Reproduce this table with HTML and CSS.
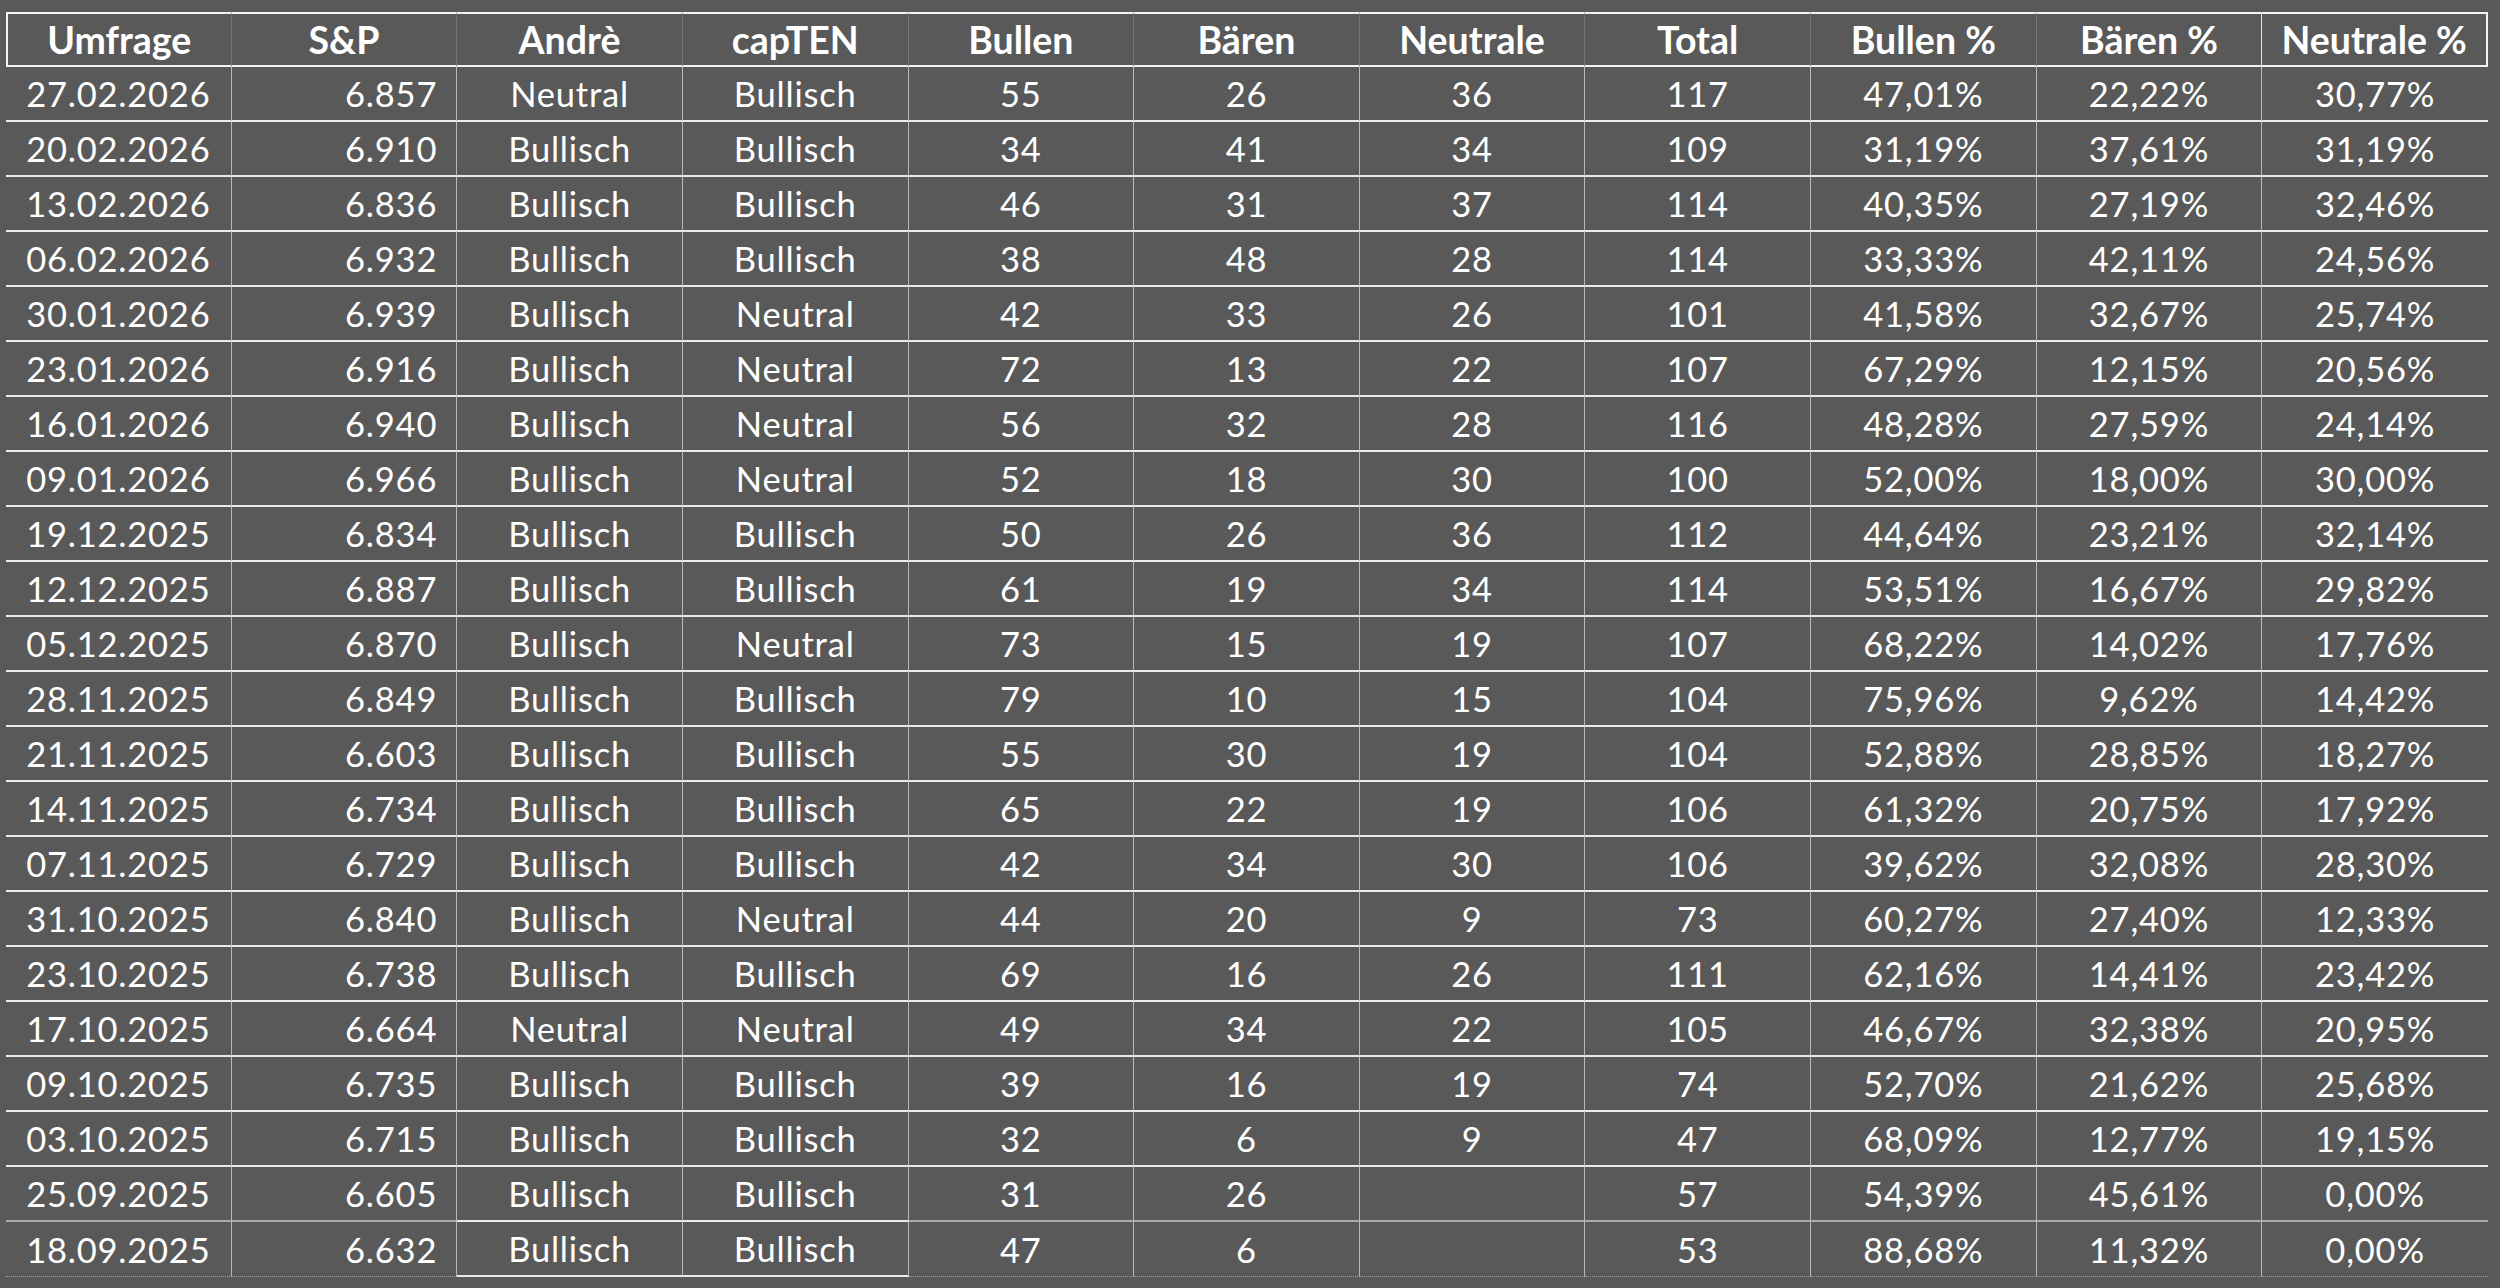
FILE: index.html
```html
<!DOCTYPE html>
<html lang="de">
<head>
<meta charset="utf-8">
<title>Umfrage</title>
<link rel="stylesheet" href="styles.css">
</head>
<body>
<table class="sheet">
<colgroup>
<col><col><col><col><col><col><col><col><col><col><col>
</colgroup>
<thead>
<tr class="head">
<th>Umfrage</th><th>S&amp;P</th><th>Andrè</th><th>capTEN</th><th>Bullen</th><th>Bären</th><th>Neutrale</th><th>Total</th><th>Bullen %</th><th class="solid">Bären %</th><th>Neutrale %</th>
</tr>
</thead>
<tbody>
<tr><td>27.02.2026</td><td class="num">6.857</td><td>Neutral</td><td>Bullisch</td><td>55</td><td>26</td><td>36</td><td>117</td><td>47,01%</td><td>22,22%</td><td>30,77%</td></tr>
<tr><td>20.02.2026</td><td class="num">6.910</td><td>Bullisch</td><td>Bullisch</td><td>34</td><td>41</td><td>34</td><td>109</td><td>31,19%</td><td>37,61%</td><td>31,19%</td></tr>
<tr><td>13.02.2026</td><td class="num">6.836</td><td>Bullisch</td><td>Bullisch</td><td>46</td><td>31</td><td>37</td><td>114</td><td>40,35%</td><td>27,19%</td><td>32,46%</td></tr>
<tr><td>06.02.2026</td><td class="num">6.932</td><td>Bullisch</td><td>Bullisch</td><td>38</td><td>48</td><td>28</td><td>114</td><td>33,33%</td><td>42,11%</td><td>24,56%</td></tr>
<tr><td>30.01.2026</td><td class="num">6.939</td><td>Bullisch</td><td>Neutral</td><td>42</td><td>33</td><td>26</td><td>101</td><td>41,58%</td><td>32,67%</td><td>25,74%</td></tr>
<tr><td>23.01.2026</td><td class="num">6.916</td><td>Bullisch</td><td>Neutral</td><td>72</td><td>13</td><td>22</td><td>107</td><td>67,29%</td><td>12,15%</td><td>20,56%</td></tr>
<tr><td>16.01.2026</td><td class="num">6.940</td><td>Bullisch</td><td>Neutral</td><td>56</td><td>32</td><td>28</td><td>116</td><td>48,28%</td><td>27,59%</td><td>24,14%</td></tr>
<tr><td>09.01.2026</td><td class="num">6.966</td><td>Bullisch</td><td>Neutral</td><td>52</td><td>18</td><td>30</td><td>100</td><td>52,00%</td><td>18,00%</td><td>30,00%</td></tr>
<tr><td>19.12.2025</td><td class="num">6.834</td><td>Bullisch</td><td>Bullisch</td><td>50</td><td>26</td><td>36</td><td>112</td><td>44,64%</td><td>23,21%</td><td>32,14%</td></tr>
<tr><td>12.12.2025</td><td class="num">6.887</td><td>Bullisch</td><td>Bullisch</td><td>61</td><td>19</td><td>34</td><td>114</td><td>53,51%</td><td>16,67%</td><td>29,82%</td></tr>
<tr><td>05.12.2025</td><td class="num">6.870</td><td>Bullisch</td><td>Neutral</td><td>73</td><td>15</td><td>19</td><td>107</td><td>68,22%</td><td>14,02%</td><td>17,76%</td></tr>
<tr><td>28.11.2025</td><td class="num">6.849</td><td>Bullisch</td><td>Bullisch</td><td>79</td><td>10</td><td>15</td><td>104</td><td>75,96%</td><td>9,62%</td><td>14,42%</td></tr>
<tr><td>21.11.2025</td><td class="num">6.603</td><td>Bullisch</td><td>Bullisch</td><td>55</td><td>30</td><td>19</td><td>104</td><td>52,88%</td><td>28,85%</td><td>18,27%</td></tr>
<tr><td>14.11.2025</td><td class="num">6.734</td><td>Bullisch</td><td>Bullisch</td><td>65</td><td>22</td><td>19</td><td>106</td><td>61,32%</td><td>20,75%</td><td>17,92%</td></tr>
<tr><td>07.11.2025</td><td class="num">6.729</td><td>Bullisch</td><td>Bullisch</td><td>42</td><td>34</td><td>30</td><td>106</td><td>39,62%</td><td>32,08%</td><td>28,30%</td></tr>
<tr><td>31.10.2025</td><td class="num">6.840</td><td>Bullisch</td><td>Neutral</td><td>44</td><td>20</td><td>9</td><td>73</td><td>60,27%</td><td>27,40%</td><td>12,33%</td></tr>
<tr><td>23.10.2025</td><td class="num">6.738</td><td>Bullisch</td><td>Bullisch</td><td>69</td><td>16</td><td>26</td><td>111</td><td>62,16%</td><td>14,41%</td><td>23,42%</td></tr>
<tr><td>17.10.2025</td><td class="num">6.664</td><td>Neutral</td><td>Neutral</td><td>49</td><td>34</td><td>22</td><td>105</td><td>46,67%</td><td>32,38%</td><td>20,95%</td></tr>
<tr><td>09.10.2025</td><td class="num">6.735</td><td>Bullisch</td><td>Bullisch</td><td>39</td><td>16</td><td>19</td><td>74</td><td>52,70%</td><td>21,62%</td><td>25,68%</td></tr>
<tr><td>03.10.2025</td><td class="num">6.715</td><td>Bullisch</td><td>Bullisch</td><td>32</td><td>6</td><td>9</td><td>47</td><td>68,09%</td><td>12,77%</td><td>19,15%</td></tr>
<tr class="soft"><td>25.09.2025</td><td class="num">6.605</td><td class="box">Bullisch</td><td class="box">Bullisch</td><td>31</td><td>26</td><td></td><td>57</td><td>54,39%</td><td>45,61%</td><td>0,00%</td></tr>
<tr class="last"><td>18.09.2025</td><td class="num">6.632</td><td class="box">Bullisch</td><td class="box">Bullisch</td><td>47</td><td>6</td><td></td><td>53</td><td>88,68%</td><td>11,32%</td><td>0,00%</td></tr>
</tbody>
</table>
</body>
</html>
```

FILE: styles.css
```css
html, body {
  margin: 0;
  padding: 0;
  background: #595959;
}

body {
  padding: 12px 0 0 6px;
  font-family: "Lato", "Open Sans", "Liberation Sans", sans-serif;
  color: #ffffff;
}

.sheet {
  border-collapse: separate;
  border-spacing: 0;
  table-layout: fixed;
  width: 2482px;
}

.sheet col {
  width: 225.6px;
}

.sheet th,
.sheet td {
  box-sizing: border-box;
  height: 55px;
  padding: 0;
  text-align: center;
  vertical-align: middle;
  font-size: 34.5px;
  letter-spacing: 0.8px;
  white-space: nowrap;
  overflow: hidden;
}

.sheet th {
  font-weight: 700;
  font-size: 37.5px;
  letter-spacing: 0;
  border-top: 2px solid #f2f2f2;
  border-bottom: 2px solid #f2f2f2;
  border-right: 1px dotted #8e8e8e;
}

.sheet th:first-child {
  border-left: 2px solid #f2f2f2;
}

.sheet th:last-child {
  border-right: 2px solid #f2f2f2;
}

.sheet th.solid {
  border-right: 1px solid #e6e6e6;
}

.sheet td {
  font-weight: 400;
  border-bottom: 2px solid #ebebeb;
  border-right: 1px solid #b9b9b9;
}

.sheet td:last-child {
  border-right: none;
}

.sheet td.num {
  text-align: right;
  padding-right: 19px;
}

.sheet tr.soft td {
  border-bottom-color: #a9a9a9;
}

.sheet tr.soft td.box {
  border-bottom-color: #ebebeb;
}

.sheet tr.last td {
  border-bottom: 1px dotted #9a9a9a;
}

.sheet tr.last td.box {
  border-bottom: 2px solid #ebebeb;
}
```
